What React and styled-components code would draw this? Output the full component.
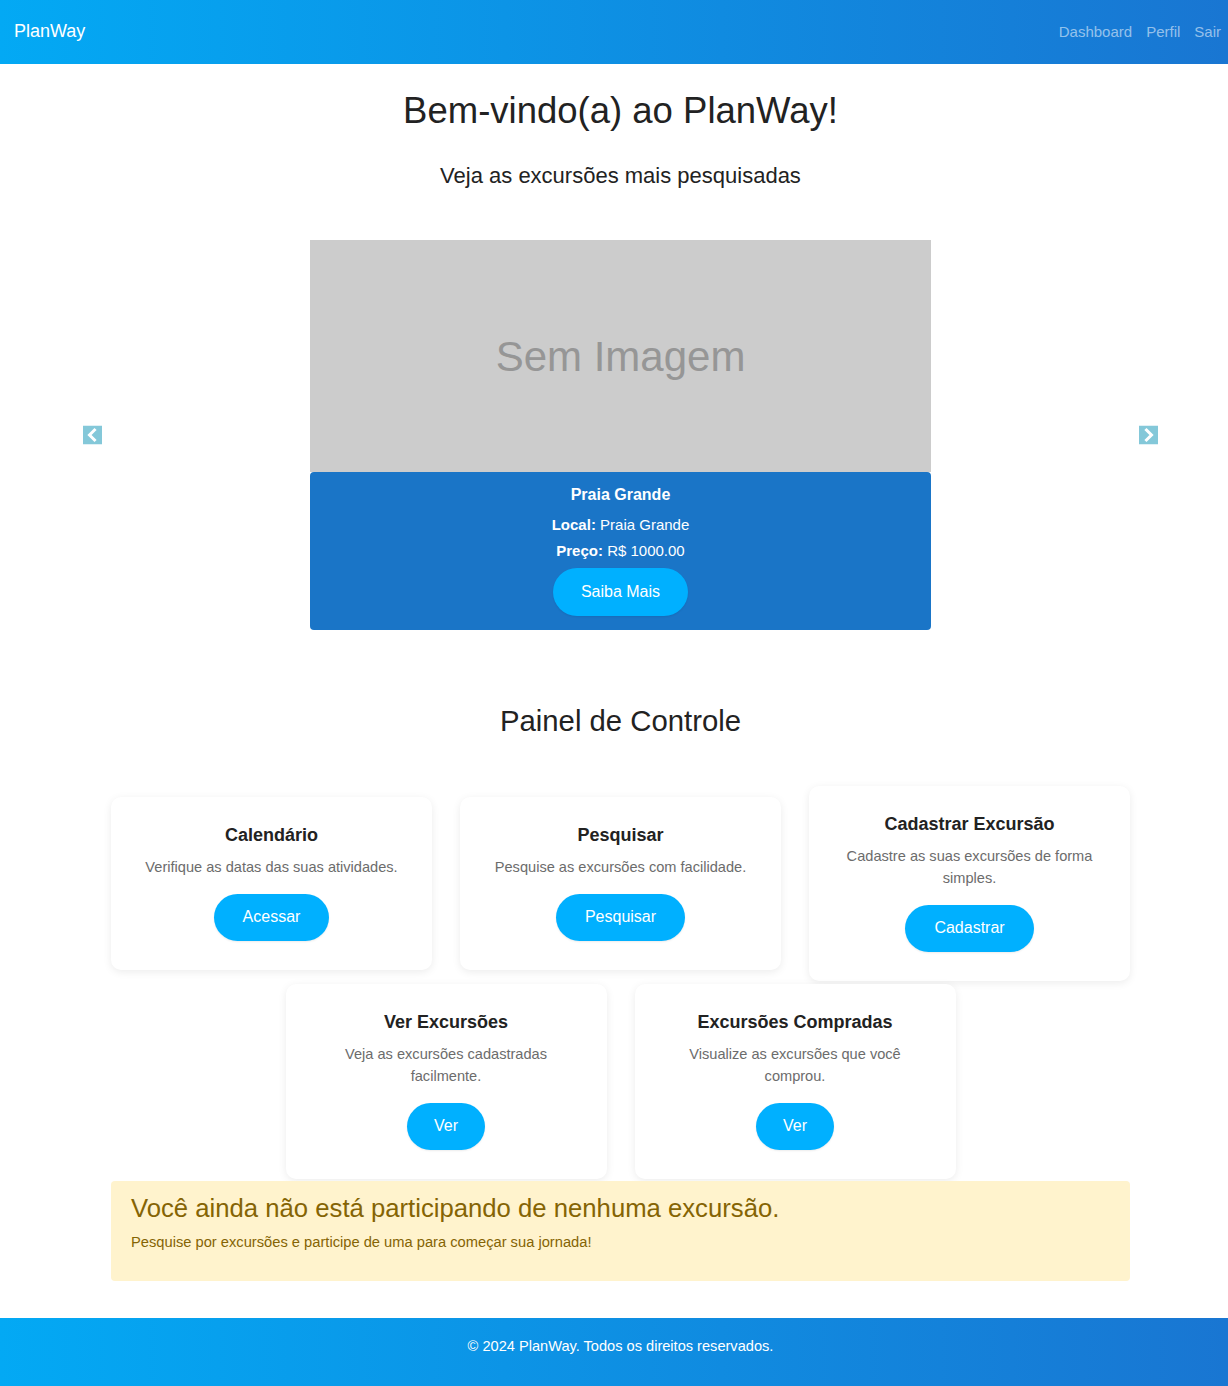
import React from "react";
import styled, { createGlobalStyle } from "styled-components";

const Global = createGlobalStyle`
  html, body { margin: 0; padding: 0; }
  body {
    font-family: "Liberation Sans", Arial, sans-serif;
    color: #212529;
    background: #fff;
  }
  * { box-sizing: border-box; }
`;

const Nav = styled.nav`
  height: 64px;
  display: flex;
  align-items: center;
  justify-content: space-between;
  padding: 0 7px 2px 14px;
  background: linear-gradient(90deg, #03a9f4, #1976d2);
`;

const Brand = styled.a`
  color: #fff;
  font-size: 18px;
  text-decoration: none;
`;

const NavLinks = styled.div`
  display: flex;
  gap: 14px;
`;

const NavLink = styled.a`
  color: rgba(255, 255, 255, 0.55);
  font-size: 15px;
  text-decoration: none;
`;

const Main = styled.main`
  padding: 0 0 0 13px;
  display: flex;
  flex-direction: column;
  align-items: center;
`;

const Title = styled.h1`
  margin: 25px 0 0;
  font-size: 36.5px;
  font-weight: 400;
  line-height: 1.2;
  color: #222;
`;

const Subtitle = styled.p`
  margin: 28px 0 0;
  font-size: 22px;
  line-height: 29px;
  color: #222;
`;

const Carousel = styled.div`
  position: relative;
  width: 100%;
  margin-top: 50px;
  display: flex;
  justify-content: center;
`;

const Slide = styled.div`
  width: 621px;
  display: flex;
  flex-direction: column;
`;

const Placeholder = styled.div`
  height: 232px;
  background: #cccccc;
  display: flex;
  align-items: center;
  justify-content: center;
  color: #969696;
  font-size: 42px;
  padding-top: 2px;
`;

const Caption = styled.div`
  background: #1a75c7;
  border-radius: 4px;
  padding: 12px 0 14px;
  display: flex;
  flex-direction: column;
  align-items: center;
  color: #fff;
`;

const CaptionTitle = styled.h5`
  margin: 0 0 8px;
  font-size: 16px;
  font-weight: 700;
  line-height: 22px;
`;

const CaptionLine = styled.p`
  margin: 0 0 ${(p) => p.$mb || 0}px;
  font-size: 15px;
  line-height: 22px;
  b { font-weight: 700; }
`;

const PillButton = styled.button`
  height: ${(p) => p.$h || 47}px;
  padding: 0 ${(p) => p.$px || 28}px;
  border: none;
  border-radius: 24px;
  background: #00b0ff;
  color: #fff;
  font-family: inherit;
  font-size: 16px;
  cursor: pointer;
  box-shadow: 0 1px 2px rgba(0, 0, 0, 0.08);
`;

const Arrow = styled.button`
  position: absolute;
  top: 50%;
  transform: translateY(-50%);
  ${(p) => (p.$side === "left" ? "left: 70px;" : "right: 70px;")}
  width: 19px;
  height: 19px;
  padding: 0;
  border: none;
  background: none;
  display: flex;
  cursor: pointer;
`;

const SectionTitle = styled.h2`
  margin: 74px 0 0;
  font-size: 29.3px;
  font-weight: 400;
  line-height: 34px;
  color: #222;
`;

const Cards = styled.div`
  width: 1019px;
  margin-top: 48px;
  display: flex;
  flex-wrap: wrap;
  justify-content: center;
  align-items: center;
  column-gap: 28px;
  row-gap: 3px;
`;

const Card = styled.div`
  width: 321px;
  background: #fff;
  border-radius: 10px;
  box-shadow: 0 2px 8px rgba(0, 0, 0, 0.08);
  padding: 27px 30px 29px;
  display: flex;
  flex-direction: column;
  align-items: center;
  text-align: center;
`;

const CardTitle = styled.h3`
  margin: 0 0 10px;
  font-size: 18px;
  font-weight: 700;
  line-height: 22px;
  color: #222;
`;

const CardText = styled.p`
  margin: 0 0 16px;
  font-size: 14.6px;
  line-height: 22px;
  color: #6c6c6c;
`;

const Alert = styled.div`
  width: 1019px;
  margin-top: 2px;
  background: #fff3cd;
  color: #856404;
  border-radius: 4px;
  padding: 12px 20px;
`;

const AlertHeading = styled.h4`
  margin: 0 0 9px;
  font-size: 25.7px;
  font-weight: 400;
  line-height: 30px;
`;

const AlertText = styled.p`
  margin: 0 0 16px;
  font-size: 14.7px;
  line-height: 21px;
`;

const Footer = styled.footer`
  margin-top: 37px;
  padding: 18px 0 31px 13px;
  background: linear-gradient(90deg, #03a9f4, #1976d2);
  color: #fff;
  text-align: center;
  font-size: 14.6px;
  line-height: 20px;
`;

const ArrowIcon = ({ dir }) => (
  <svg width="19" height="19" viewBox="0 0 19 19">
    <rect width="19" height="19" fill="#84c8d9" />
    <polyline
      points={dir === "left" ? "11.5,4.5 6.5,9.5 11.5,14.5" : "7.5,4.5 12.5,9.5 7.5,14.5"}
      fill="none"
      stroke="#fff"
      strokeWidth="3"
      strokeLinecap="square"
    />
  </svg>
);

const cards = [
  { t: "Calendário", d: "Verifique as datas das suas atividades.", b: "Acessar" },
  { t: "Pesquisar", d: "Pesquise as excursões com facilidade.", b: "Pesquisar" },
  { t: "Cadastrar Excursão", d: "Cadastre as suas excursões de forma simples.", b: "Cadastrar" },
  { t: "Ver Excursões", d: "Veja as excursões cadastradas facilmente.", b: "Ver" },
  { t: "Excursões Compradas", d: "Visualize as excursões que você comprou.", b: "Ver" },
];

export default function App() {
  return (
    <>
      <Global />
      <Nav>
        <Brand href="#">PlanWay</Brand>
        <NavLinks>
          <NavLink href="#">Dashboard</NavLink>
          <NavLink href="#">Perfil</NavLink>
          <NavLink href="#">Sair</NavLink>
        </NavLinks>
      </Nav>
      <Main>
        <Title>Bem-vindo(a) ao PlanWay!</Title>
        <Subtitle>Veja as excursões mais pesquisadas</Subtitle>
        <Carousel>
          <Slide>
            <Placeholder>Sem Imagem</Placeholder>
            <Caption>
              <CaptionTitle>Praia Grande</CaptionTitle>
              <CaptionLine $mb={4}>
                <b>Local:</b> Praia Grande
              </CaptionLine>
              <CaptionLine $mb={6}>
                <b>Preço:</b> R$ 1000.00
              </CaptionLine>
              <PillButton $h={48}>Saiba Mais</PillButton>
            </Caption>
          </Slide>
          <Arrow $side="left" aria-label="Anterior">
            <ArrowIcon dir="left" />
          </Arrow>
          <Arrow $side="right" aria-label="Próximo">
            <ArrowIcon dir="right" />
          </Arrow>
        </Carousel>
        <SectionTitle>Painel de Controle</SectionTitle>
        <Cards>
          {cards.map((c) => (
            <Card key={c.t}>
              <CardTitle>{c.t}</CardTitle>
              <CardText>{c.d}</CardText>
              <PillButton $px={c.b === "Ver" ? 27 : 29}>{c.b}</PillButton>
            </Card>
          ))}
        </Cards>
        <Alert>
          <AlertHeading>Você ainda não está participando de nenhuma excursão.</AlertHeading>
          <AlertText>Pesquise por excursões e participe de uma para começar sua jornada!</AlertText>
        </Alert>
      </Main>
      <Footer>© 2024 PlanWay. Todos os direitos reservados.</Footer>
    </>
  );
}
